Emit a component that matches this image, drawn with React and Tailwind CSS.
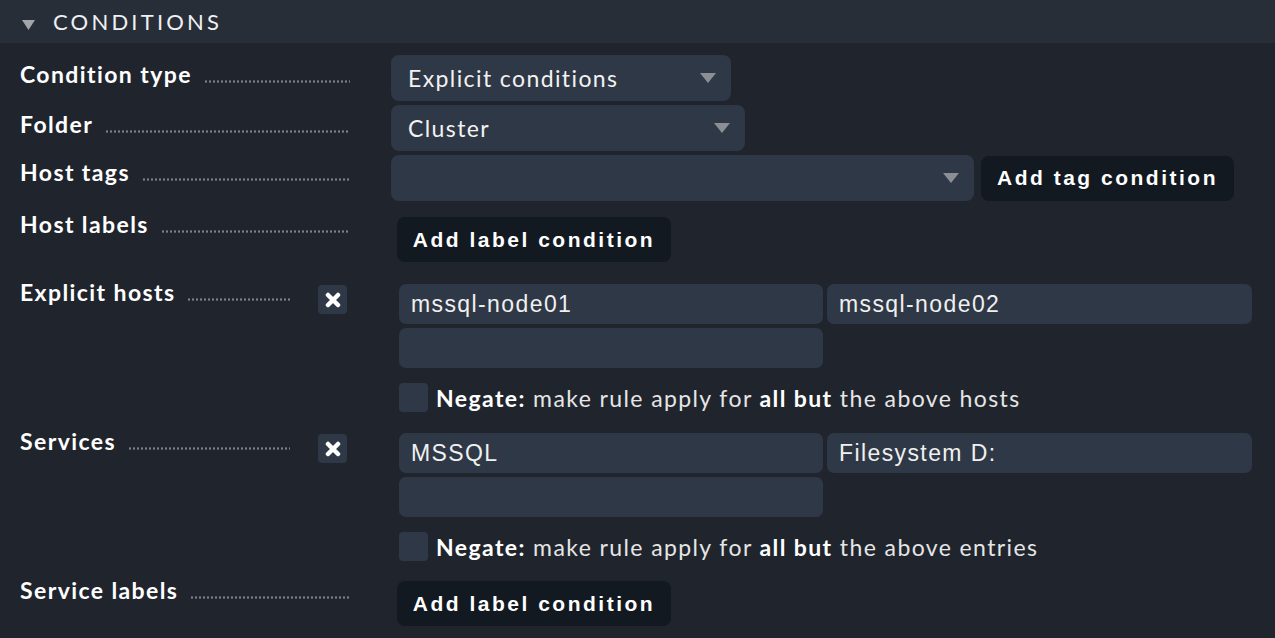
import React from 'react'

const lato = { fontFamily: 'Lato, "Open Sans", sans-serif' }
const arial = { fontFamily: '"Liberation Sans", Arial, sans-serif' }

function Caret() {
  return (
    <svg width="16" height="10" viewBox="0 0 16 10">
      <path d="M0 0 L16 0 L8 10 Z" fill="#8b8e93" />
    </svg>
  )
}

function Label({ text, short = false, remove = false, mt = 0 }) {
  return (
    <div className="flex items-start w-[330px] shrink-0" style={{ marginTop: mt }}>
      <div className={`flex items-end ${short ? 'w-[270px]' : 'w-[330px]'}`}>
        <span
          className="text-[23px] leading-[28px] font-bold tracking-[1.4px] text-white whitespace-nowrap"
          style={lato}
        >
          {text}
        </span>
        <span className="flex-1 ml-[12px] mb-[5px] h-[3px] bg-[radial-gradient(circle,#7b8088_1px,transparent_1.3px)] bg-[length:4px_3px] bg-repeat-x" />
      </div>
      {remove && (
        <button className="ml-[28px] mt-[7px] w-[29px] h-[29px] rounded-[4px] bg-[#2f3846] flex items-center justify-center">
          <svg width="16" height="16" viewBox="0 0 16 16">
            <path d="M3 3 L13 13 M13 3 L3 13" stroke="#fff" strokeWidth="4.5" strokeLinecap="round" />
          </svg>
        </button>
      )}
    </div>
  )
}

function Select({ value, width }) {
  return (
    <div
      className="h-[46px] rounded-[8px] bg-[#2f3846] flex items-center justify-between pl-[17px] pr-[15px]"
      style={{ width }}
    >
      <span className="text-[23px] tracking-[1.4px] text-[#f2f2f2]" style={lato}>
        {value}
      </span>
      <Caret />
    </div>
  )
}

function DarkButton({ children, className = '' }) {
  return (
    <button
      className={`h-[45px] rounded-[8px] bg-[#121920] text-white font-bold text-[21px] tracking-[2.5px] ${className}`}
      style={arial}
    >
      {children}
    </button>
  )
}

function TextInput({ value }) {
  return (
    <div className="h-[40px] rounded-[7px] bg-[#2f3846] flex items-center px-[12px]">
      <span className="text-[23px] tracking-[1.4px] text-[#f0f0f0]" style={arial}>
        {value}
      </span>
    </div>
  )
}

function Negate({ what }) {
  return (
    <div className="flex items-center mt-[15px]">
      <div className="w-[29px] h-[29px] rounded-[4px] bg-[#2f3846]" />
      <span
        className="ml-[8px] text-[23px] leading-[28px] tracking-[1.4px] text-[#e6e6e6] whitespace-nowrap"
        style={lato}
      >
        <b className="font-bold text-white">Negate:</b> make rule apply for{' '}
        <b className="font-bold text-white">all but</b> the above {what}
      </span>
    </div>
  )
}

function ListInputs({ a, b }) {
  return (
    <div className="ml-[8px]">
      <div className="grid grid-cols-[424px_425px] gap-[4px]">
        <TextInput value={a} />
        <TextInput value={b} />
        <TextInput value="" />
      </div>
    </div>
  )
}

export default function App() {
  return (
    <div className="w-[1275px] h-[638px] bg-[#20252d] overflow-hidden">
      <div className="h-[43px] bg-[#282e38] flex items-center pl-[22px]">
        <svg width="13" height="10" viewBox="0 0 13 10" className="mt-[6px]">
          <path d="M0 0 L13 0 L6.5 10 Z" fill="#a2a5aa" />
        </svg>
        <span className="ml-[18px] text-[22px] tracking-[3.2px] text-[#eef0f2]" style={lato}>
          CONDITIONS
        </span>
      </div>

      <div className="pl-[20px]">
        <div className="flex items-start mt-[12px]">
          <Label text="Condition type" mt={5} />
          <div className="ml-[41px]">
            <Select value="Explicit conditions" width={340} />
          </div>
        </div>

        <div className="flex items-start mt-[4px]">
          <Label text="Folder" mt={5} />
          <div className="ml-[41px]">
            <Select value="Cluster" width={354} />
          </div>
        </div>

        <div className="flex items-start mt-[4px]">
          <Label text="Host tags" mt={3} />
          <div className="ml-[41px] flex items-center gap-[7px]">
            <Select value="" width={583} />
            <DarkButton className="w-[253px]">Add tag condition</DarkButton>
          </div>
        </div>

        <div className="flex items-start mt-[9px]">
          <Label text="Host labels" />
          <div className="ml-[47px] mt-[7px]">
            <DarkButton className="w-[274px]">Add label condition</DarkButton>
          </div>
        </div>

        <div className="flex items-start mt-[16px]">
          <Label text="Explicit hosts" short remove />
          <div className="ml-[41px] mt-[6px]">
            <ListInputs a="mssql-node01" b="mssql-node02" />
            <div className="ml-[8px]">
              <Negate what="hosts" />
            </div>
          </div>
        </div>

        <div className="flex items-start mt-[15px]">
          <Label text="Services" short remove />
          <div className="ml-[41px] mt-[6px]">
            <ListInputs a="MSSQL" b="Filesystem D:" />
            <div className="ml-[8px]">
              <Negate what="entries" />
            </div>
          </div>
        </div>

        <div className="flex items-start mt-[15px]">
          <Label text="Service labels" />
          <div className="ml-[47px] mt-[5px]">
            <DarkButton className="w-[274px]">Add label condition</DarkButton>
          </div>
        </div>
      </div>
    </div>
  )
}
